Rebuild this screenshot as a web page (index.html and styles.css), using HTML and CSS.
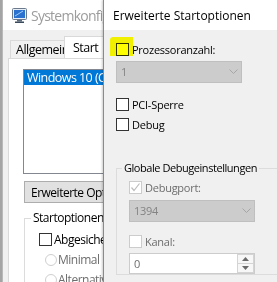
FILE: index.html
```html
<!DOCTYPE html>
<html lang="de">
<head>
<meta charset="utf-8">
<title>Erweiterte Startoptionen</title>
<link rel="stylesheet" href="styles.css">
</head>
<body>
<div class="desktop">
  <div class="win back">
    <div class="titlebar">
      <svg class="appicon" width="15" height="15" viewBox="0 0 15 15">
        <rect x="0.5" y="0.5" width="14" height="11" rx="1" fill="#e8eef5" stroke="#6a7a8c"/>
        <rect x="2" y="2" width="11" height="8" fill="#2a72d0"/>
        <path d="M3 8 L11 3" stroke="#9fd0ff" stroke-width="1"/>
        <rect x="5" y="12" width="5" height="1.5" fill="#5a6a7c"/>
        <rect x="3" y="13.5" width="9" height="1.5" fill="#3a4a5c"/>
      </svg>
      <span class="wtitle">Systemkonfiguration</span>
    </div>
    <div class="tabs">
      <div class="tab">Allgemein</div>
      <div class="tab active">Start</div>
      <div class="tab">Dienste</div>
    </div>
    <div class="panel">
      <div class="listbox">
        <div class="item sel">Windows 10 (C:\Windows) : Aktuelles Betriebssystem</div>
      </div>
      <div class="btn">Erweiterte Optionen...</div>
      <fieldset class="bgroup">
        <legend>Startoptionen</legend>
        <div class="brow"><span class="bbox"></span><span>Abgesicherter Start</span></div>
        <div class="brow radio"><span class="circle"></span><span class="dis">Minimal</span></div>
        <div class="brow radio"><span class="circle"></span><span class="dis">Alternative Shell</span></div>
      </fieldset>
    </div>
  </div>

  <div class="win front">
    <div class="ftitle">Erweiterte Startoptionen</div>
    <div class="client">
      <div class="crow first">
        <span class="mark"></span>
        <span class="box"></span><span class="lbl">Prozessoranzahl:</span>
      </div>
      <div class="combo"><span>1</span>
        <svg width="9" height="5" viewBox="0 0 9 5"><polyline points="0.5,0.5 4.5,4.5 8.5,0.5" fill="none" stroke="#a6a6a6"/></svg>
      </div>
      <div class="crow pci"><span class="box"></span><span class="lbl">PCI-Sperre</span></div>
      <div class="crow"><span class="box"></span><span class="lbl">Debug</span></div>
      <fieldset class="group">
        <legend>Globale Debugeinstellungen</legend>
        <div class="crow g1"><span class="box dbox">
          <svg width="11" height="11" viewBox="0 0 11 11"><polyline points="1.5,5.5 4,8.5 9.5,1.5" fill="none" stroke="#bcbcbc" stroke-width="1.2"/></svg>
        </span><span class="lbl dis">Debugport:</span></div>
        <div class="combo gcombo"><span>1394</span>
          <svg width="9" height="5" viewBox="0 0 9 5"><polyline points="0.5,0.5 4.5,4.5 8.5,0.5" fill="none" stroke="#a6a6a6"/></svg>
        </div>
        <div class="crow g2"><span class="box dbox"></span><span class="lbl dis">Kanal:</span></div>
        <div class="spin">
          <span class="val">0</span>
          <span class="arrows">
            <span class="ab"><svg width="7" height="4" viewBox="0 0 7 4"><polygon points="3.5,0 7,4 0,4" fill="#6a6a6a"/></svg></span>
            <span class="ab"><svg width="7" height="4" viewBox="0 0 7 4"><polygon points="0,0 7,0 3.5,4" fill="#6a6a6a"/></svg></span>
          </span>
        </div>
      </fieldset>
    </div>
  </div>
</div>
</body>
</html>
```
FILE: styles.css
```css
* { box-sizing: border-box; }
body {
  margin: 0;
  width: 277px;
  height: 282px;
  overflow: hidden;
  background: #a4a4a4;
  font-family: "Open Sans", "Noto Sans", sans-serif;
  font-size: 11px;
  letter-spacing: -0.25px;
  color: #000;
}
.desktop { position: relative; width: 277px; height: 282px; overflow: hidden; }
.win { position: absolute; top: 0; }

/* background window */
.back {
  left: 2px;
  width: 320px;
  height: 300px;
  background: #f0f0f0;
  border-left: 1px solid #b8b8b8;
}
.titlebar {
  height: 30px;
  background: #fff;
  display: flex;
  align-items: center;
  padding-left: 9px;
  gap: 4px;
}
.appicon { flex: none; margin-top: 1px; }
.wtitle { color: #9c9c9c; font-size: 14px; white-space: nowrap; letter-spacing: -0.75px; }
.tabs {
  height: 28px;
  display: flex;
  align-items: flex-end;
  padding-left: 7px;
  font-size: 12.5px;
  letter-spacing: -0.5px;
}
.tab {
  height: 18px;
  border: 1px solid #d9d9d9;
  border-bottom: none;
  background: #f0f0f0;
  display: flex;
  align-items: center;
  padding-left: 5px;
  white-space: nowrap;
  width: 55px;
}
.tab.active {
  height: 22px;
  background: #fff;
  width: 50px;
  padding-left: 8px;
  margin-left: -1px;
  padding-bottom: 1px;
}
.panel {
  margin-left: 5px;
  height: 240px;
  background: #fff;
  border: 1px solid #d9d9d9;
  padding: 10px 0 0 14px;
  font-size: 12px;
  letter-spacing: -0.5px;
}
.listbox {
  height: 105px;
  border: 1px solid #828790;
  width: 300px;
}
.item {
  height: 15px;
  line-height: 15px;
  padding-left: 3px;
  white-space: nowrap;
  font-size: 12.5px;
  letter-spacing: -0.55px;
}
.item.sel { background: #0078d7; color: #fff; }
.btn {
  margin: 7px 0 0 1px;
  width: 120px;
  height: 22px;
  background: #e1e1e1;
  border: 1px solid #adadad;
  display: flex;
  align-items: center;
  padding-left: 6px;
  white-space: nowrap;
}
.bgroup {
  margin: 7px 0 0 1px;
  width: 200px;
  border: 1px solid #dcdcdc;
  padding: 3px 0 0 14px;
}
.bgroup legend {
  padding: 0 2px;
  margin-left: -8px;
  line-height: 16px;
}
.brow { height: 20px; display: flex; align-items: center; gap: 2px; white-space: nowrap; }
.bbox { width: 13px; height: 13px; border: 1px solid #333; background: #fff; flex: none; }
.brow.radio { padding-left: 6px; gap: 1px; height: 19px; margin-top: 1px; }
.circle { width: 12px; height: 12px; border: 1px solid #cfcfcf; border-radius: 50%; background: #fff; flex: none; }
.dis { color: #6d6d6d; }

/* front dialog */
.front {
  left: 103px;
  width: 200px;
  height: 282px;
  background: #f0f0f0;
  border-left: 1px solid #8a8a8a;
  box-shadow: -1px 0 2px rgba(0, 0, 0, 0.2);
}
.ftitle {
  height: 30px;
  background: #fff;
  padding-left: 9px;
  display: flex;
  align-items: center;
  white-space: nowrap;
  font-size: 12px;
  letter-spacing: 0;
}
.client {
  padding-left: 12px;
  display: flex;
  flex-direction: column;
}
.crow {
  position: relative;
  height: 20px;
  display: flex;
  align-items: center;
  gap: 3px;
  white-space: nowrap;
}
.crow.first { margin-top: 9px; }
.crow.pci { margin-top: 11px; }
.box {
  width: 13px;
  height: 13px;
  border: 1px solid #333;
  background: #fff;
  flex: none;
  display: flex;
  align-items: center;
  justify-content: center;
}
.dbox { border-color: #cccccc; }
.mark {
  position: absolute;
  left: -6px;
  top: -2px;
  width: 23px;
  height: 19px;
  background: #ffff00;
  mix-blend-mode: multiply;
  z-index: 2;
  border-radius: 3px 0 0 0;
}
.combo {
  width: 126px;
  height: 22px;
  margin-top: 2px;
  background: #cccccc;
  border: 1px solid #bfbfbf;
  display: flex;
  align-items: center;
  justify-content: space-between;
  padding: 0 3px 1px 4px;
  color: #838383;
}
.combo svg { flex: none; }
.group {
  margin: 26px 0 0 0;
  width: 200px;
  border: 1px solid #dcdcdc;
  border-right: none;
  padding: 1px 0 0 12px;
  display: flex;
  flex-direction: column;
}
.group legend {
  padding: 0 2px;
  margin-left: -7px;
  line-height: 16px;
  letter-spacing: -0.45px;
}
.gcombo { margin-top: 3px; }
.crow.g2 { margin-top: 9px; }
.spin {
  width: 126px;
  height: 21px;
  margin-top: 2px;
  border: 1px solid #cccccc;
  background: #fff;
  display: flex;
  align-items: center;
  padding-left: 4px;
}
.val { flex: 1; color: #6d6d6d; }
.arrows {
  width: 17px;
  height: 19px;
  display: flex;
  flex-direction: column;
}
.ab {
  flex: 1;
  border: 1px solid #d4d4d4;
  background: #f7f7f7;
  display: flex;
  align-items: center;
  justify-content: center;
}
.ab + .ab { border-top: none; }
```
